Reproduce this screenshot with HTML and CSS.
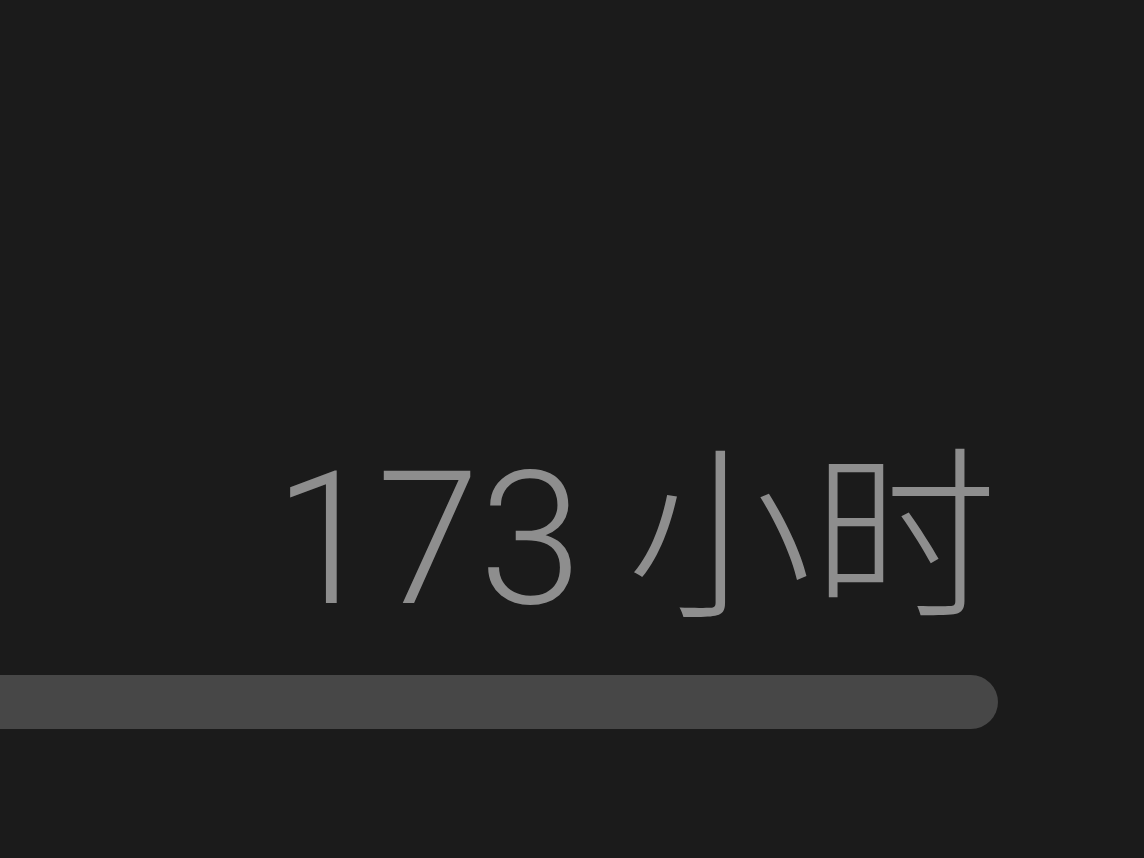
FILE: index.html
```html
<!DOCTYPE html>
<html lang="zh-CN">
<head>
<meta charset="utf-8">
<link rel="stylesheet" href="styles.css">
</head>
<body>
<div class="stat">
  <div class="value">173 小时</div>
  <div class="track"></div>
</div>
</body>
</html>
```

FILE: styles.css
```css
html, body {
  margin: 0;
  padding: 0;
  background: #1b1b1b;
  width: 1144px;
  height: 858px;
  overflow: hidden;
}
.stat {
  width: 998px;
  padding-top: 420px;
  display: flex;
  flex-direction: column;
  align-items: flex-end;
}
.value {
  font-family: Roboto, "Noto Sans CJK SC", sans-serif;
  font-weight: 300;
  font-size: 185px;
  line-height: 240px;
  color: #8e8e8e;
  margin-right: 1px;
  white-space: nowrap;
}
.track {
  align-self: stretch;
  height: 54px;
  margin-top: 15px;
  margin-left: -40px;
  background: #474747;
  border-radius: 27px;
}
```
